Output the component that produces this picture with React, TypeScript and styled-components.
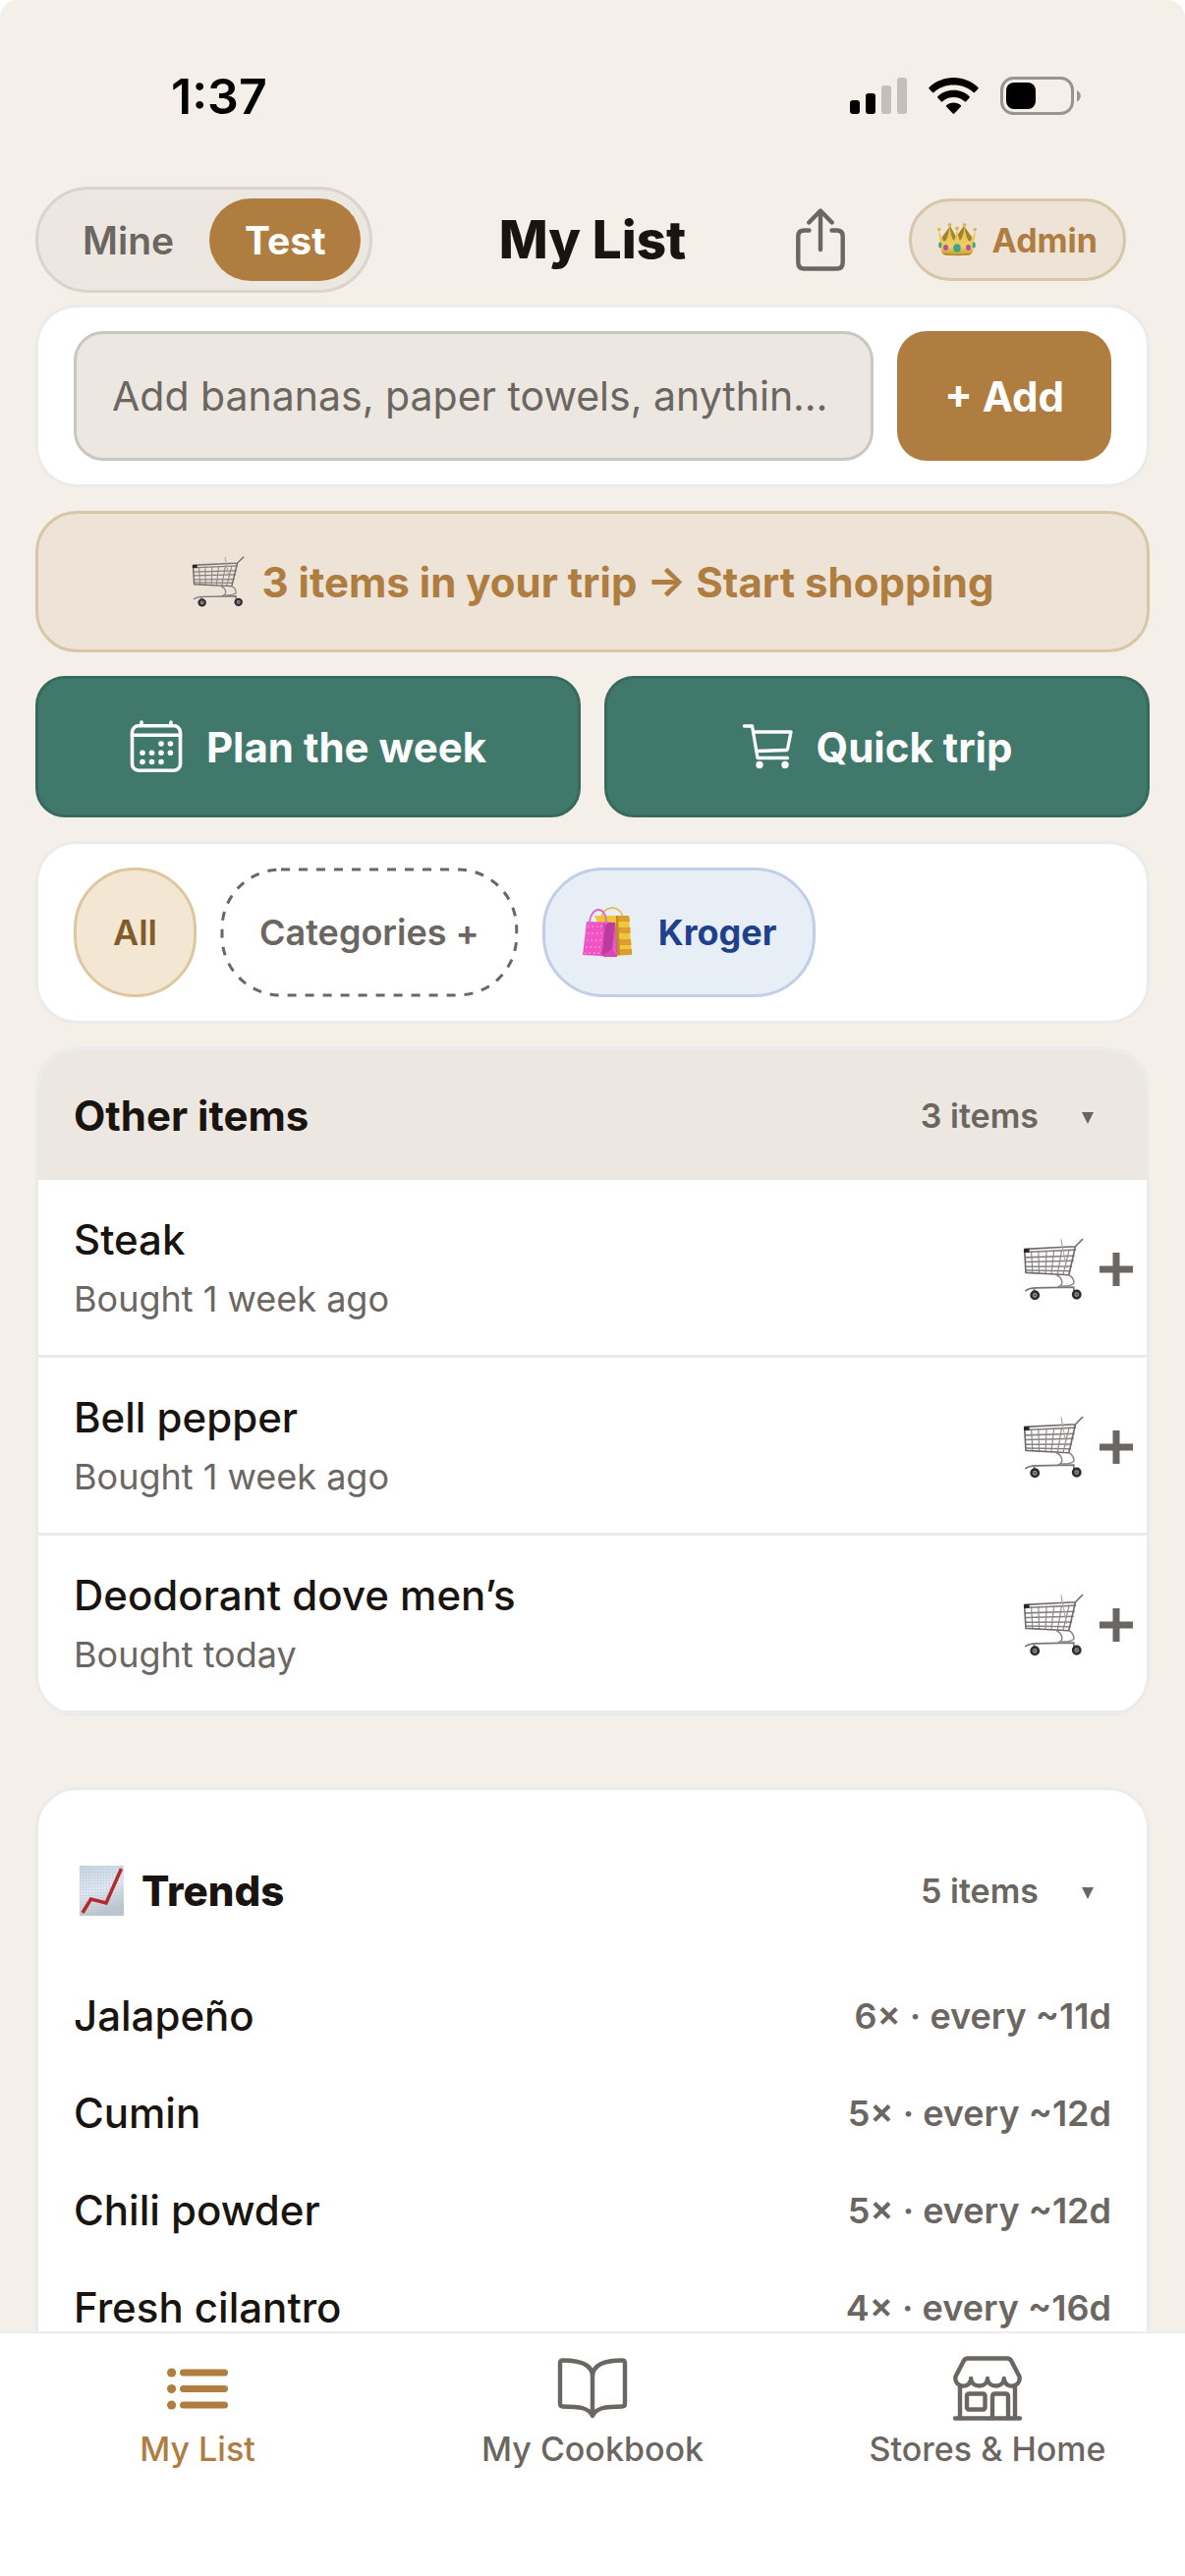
import React, { useState } from "react";
import styled, { createGlobalStyle } from "styled-components";

const color = {
  page: "#f4efe9",
  ink: "#1a1410",
  muted: "#6b6661",
  brand: "#af7d40",
  brandSoft: "#eee3d7",
  brandLine: "#d8c6a8",
  sunken: "#ece7e0",
  line: "#ebebeb",
  green: "#40796b",
  greenLine: "#376a5d",
  white: "#ffffff",
};

const GlobalStyle = createGlobalStyle`
  * { box-sizing: border-box; }
  html { background: ${color.white}; }
  body { margin: 0; font-family: Inter, "Liberation Sans", sans-serif; color: ${color.ink}; }
  button, input { font: inherit; color: inherit; margin: 0; }
  button { border: 0; padding: 0; background: none; cursor: pointer; }
  h1, h2, p, ul { margin: 0; padding: 0; }
  ul { list-style: none; }
  svg { display: block; flex: none; }
`;

const Screen = styled.div`
  display: flex;
  flex-direction: column;
  height: 100vh;
  background: ${color.page};
  border-radius: 18px 18px 0 0;
  overflow: hidden;
`;

const StatusBar = styled.div`
  display: flex;
  flex: none;
  justify-content: space-between;
  align-items: center;
  padding: 66px 106px 60px 174px;
`;

const Clock = styled.time`
  font-size: 50px;
  line-height: 64px;
  font-weight: 600;
  color: #000000;
`;

const StatusIcons = styled.div`
  display: flex;
  align-items: center;
  gap: 22px;
`;

const Header = styled.header`
  display: grid;
  flex: none;
  grid-template-columns: 1fr auto 1fr;
  align-items: center;
  padding: 0 36px 12px;
`;

const Segmented = styled.div`
  display: flex;
  justify-self: start;
  padding: 9px;
  border: 3px solid #d9d4cd;
  border-radius: 54px;
  background: ${color.sunken};
`;

const Segment = styled.button<{ $active: boolean }>`
  height: 84px;
  padding: 0 36px;
  border-radius: 42px;
  font-size: 39px;
  font-weight: ${(p) => (p.$active ? 700 : 600)};
  color: ${(p) => (p.$active ? color.white : color.muted)};
  background: ${(p) => (p.$active ? color.brand : "transparent")};
`;

const Title = styled.h1`
  font-size: 53px;
  line-height: 64px;
  font-weight: 800;
`;

const HeaderActions = styled.div`
  display: flex;
  justify-self: end;
  align-items: center;
  gap: 48px;
  padding-right: 24px;
`;

const IconButton = styled.button`
  display: grid;
  place-items: center;
  width: 84px;
  height: 84px;
  color: ${color.muted};
`;

const AdminBadge = styled.button`
  display: flex;
  align-items: center;
  gap: 16px;
  height: 84px;
  padding: 0 26px;
  border: 3px solid ${color.brandLine};
  border-radius: 42px;
  background: ${color.brandSoft};
  color: ${color.brand};
  font-size: 34px;
  font-weight: 700;
`;

const Content = styled.main`
  display: flex;
  flex: 1;
  flex-direction: column;
  gap: 24px;
  min-height: 0;
  padding: 0 36px;
  overflow: hidden;
`;

const Card = styled.section`
  flex: none;
  border: 3px solid ${color.line};
  border-radius: 42px;
  background: ${color.white};
  overflow: hidden;
`;

const Bar = styled(Card)`
  display: flex;
  gap: 24px;
  padding: 24px 36px;
`;

const AddForm = styled.form`
  display: flex;
  flex: 1;
  gap: 24px;
`;

const AddInput = styled.input`
  flex: 1;
  min-width: 0;
  height: 132px;
  padding: 0 36px;
  border: 3px solid #cac7c1;
  border-radius: 30px;
  background: ${color.sunken};
  font-size: 41px;
  outline: none;

  &::placeholder {
    color: ${color.muted};
    opacity: 1;
  }
`;

const AddButton = styled.button`
  flex: none;
  height: 132px;
  padding: 0 48px;
  border-radius: 30px;
  background: ${color.brand};
  color: ${color.white};
  font-size: 42px;
  font-weight: 700;
`;

const TripBanner = styled.button`
  display: flex;
  flex: none;
  justify-content: center;
  align-items: center;
  gap: 18px;
  height: 144px;
  border: 3px solid ${color.brandLine};
  border-radius: 42px;
  background: ${color.brandSoft};
  color: ${color.brand};
  font-size: 42px;
  font-weight: 700;
`;

const ActionRow = styled.div`
  display: grid;
  flex: none;
  grid-template-columns: 1fr 1fr;
  gap: 24px;
`;

const ActionButton = styled.button`
  display: flex;
  justify-content: center;
  align-items: center;
  gap: 24px;
  height: 144px;
  border: 3px solid ${color.greenLine};
  border-radius: 30px;
  background: ${color.green};
  color: ${color.white};
  font-size: 42px;
  font-weight: 700;
`;

const chipTones = {
  all: "border-color: #dec7a0; background: #f3e7d3; color: #835b2a; font-weight: 600;",
  add: "border-color: transparent; background: transparent; color: #6b6661; font-weight: 600;",
  store: "border-color: #c1cfe6; background: #e8eef6; color: #1f418c; font-weight: 700;",
};

const Chip = styled.button<{ $tone: keyof typeof chipTones }>`
  position: relative;
  display: flex;
  align-items: center;
  gap: 26px;
  height: 132px;
  padding: 0 37px;
  border: 3px solid;
  border-radius: 62px;
  font-size: 36px;
  ${(p) => chipTones[p.$tone]}
`;

const DashedRing = styled.svg`
  position: absolute;
  inset: -3px;
  width: calc(100% + 6px);
  height: calc(100% + 6px);
  padding: 2px;
  overflow: visible;
  fill: none;
  stroke: ${color.muted};
  stroke-width: 3px;
  stroke-dasharray: 9 9;
`;

const GroupHeader = styled.button<{ $filled?: boolean }>`
  display: flex;
  align-items: center;
  width: 100%;
  height: 132px;
  padding: 0 36px;
  background: ${(p) => (p.$filled ? color.sunken : "transparent")};
  text-align: left;
`;

const GroupTitle = styled.span<{ $strong?: boolean }>`
  display: flex;
  flex: 1;
  align-items: center;
  gap: 18px;
  padding-left: ${(p) => (p.$strong ? 6 : 0)}px;
  font-size: 42px;
  font-weight: ${(p) => (p.$strong ? 800 : 700)};
`;

const GroupCount = styled.span`
  font-size: 34px;
  font-weight: 600;
  color: ${color.muted};
`;

const Caret = styled.span`
  display: grid;
  place-items: center;
  width: 48px;
  margin-left: 26px;
  padding-top: 5px;
  color: ${color.muted};
`;

const ItemRow = styled.li`
  display: flex;
  align-items: center;
  gap: 16px;
  min-height: 181px;
  padding: 0 14px 0 36px;
  border-bottom: 3px solid ${color.line};
`;

const ItemText = styled.div`
  display: flex;
  flex: 1;
  flex-direction: column;
  gap: 9px;
`;

const ItemName = styled.p`
  font-size: 42px;
  line-height: 54px;
  font-weight: 500;
`;

const ItemNote = styled.p`
  font-size: 36px;
  line-height: 48px;
  color: ${color.muted};
`;

const RowButton = styled.button`
  display: grid;
  place-items: center;
  height: 72px;
  padding-top: 4px;
  color: ${color.muted};
`;

const TrendsCard = styled(Card)`
  margin-top: 48px;
  padding: 36px 0;
`;

const TrendList = styled.ul`
  padding: 12px 36px 0;
`;

const TrendRow = styled.li`
  display: flex;
  justify-content: space-between;
  align-items: center;
  height: 99px;
`;

const TrendRate = styled.span`
  font-size: 36px;
  font-weight: 600;
  color: ${color.muted};
`;

const TabBar = styled.nav`
  display: grid;
  flex: none;
  grid-template-columns: repeat(3, 1fr);
  padding: 20px 0 108px;
  border-top: 2px solid ${color.line};
  background: ${color.white};
`;

const Tab = styled.a<{ $active?: boolean }>`
  display: grid;
  justify-items: center;
  gap: 5px;
  color: ${(p) => (p.$active ? color.brand : color.muted)};
  font-size: 34px;
  line-height: 42px;
  font-weight: 500;
  text-decoration: none;
`;

const TabIcon = styled.span`
  display: grid;
  place-items: center;
  height: 72px;
`;

const SignalIcon = () => (
  <svg width="58" height="38" viewBox="0 0 58 38" aria-hidden="true">
    <rect x="0" y="23" width="10" height="14" rx="3" />
    <rect x="16" y="16" width="10" height="21" rx="3" />
    <rect x="32" y="8" width="10" height="29" rx="3" fill="#c5bfb9" />
    <rect x="48" y="0" width="10" height="37" rx="3" fill="#c5bfb9" />
  </svg>
);

const WifiIcon = () => (
  <svg width="51" height="38" viewBox="0 0 51 38" aria-hidden="true">
    <path d="M25.500 0C35.200 0 44 3.700 50.500 10Q51 10.700 50.400 11.400L47 15Q46.300 15.600 45.600 15C40.300 10 33.300 7.400 25.500 7.400S10.700 10 5.400 15Q4.700 15.600 4 15L.6 11.400Q0 10.700.5 10C7 3.700 15.800 0 25.500 0Z" />
    <path d="M25.500 12.800C31.800 12.800 37.500 15.200 41.700 19.200Q42.300 19.900 41.700 20.500L38.200 24.200Q37.500 24.800 36.800 24.200C33.800 21.500 29.800 20 25.500 20S17.200 21.500 14.200 24.200Q13.500 24.800 12.800 24.200L9.300 20.500Q8.700 19.900 9.300 19.200C13.500 15.200 19.200 12.800 25.500 12.800Z" />
    <path d="M25.500 25.500C28.300 25.500 30.900 26.500 32.900 28.200Q33.500 28.900 32.900 29.600L26.300 36.600Q25.500 37.300 24.700 36.600L18.100 29.600Q17.500 28.900 18.100 28.200C20.100 26.500 22.700 25.500 25.500 25.500Z" />
  </svg>
);

const BatteryIcon = () => (
  <svg width="82" height="40" viewBox="0 0 82 40" aria-hidden="true">
    <rect x="1.500" y="1.500" width="72" height="36" rx="12" fill="none" stroke="#98948f" strokeWidth="3" />
    <path d="M78 14c5 2.500 5 9 0 11.500z" fill="#98948f" />
    <rect x="6" y="6" width="30" height="27" rx="8" />
  </svg>
);

const ShareIcon = () => (
  <svg width="50" height="65" viewBox="0 0 50 65" fill="none" stroke="currentColor" strokeWidth="4.400" strokeLinecap="round" strokeLinejoin="round" aria-hidden="true">
    <path d="M13.500 22.500H8.500Q2.300 22.500 2.300 28.500V55Q2.300 61.500 8.500 61.500H41.500Q47.700 61.500 47.700 55V28.500Q47.700 22.500 41.500 22.500H36.500" />
    <path d="M25 42V3M13.300 14.500L25 2.500L36.700 14.500" />
  </svg>
);

const CrownIcon = () => (
  <svg width="40" height="34" viewBox="0 0 40 34" aria-hidden="true">
    <defs>
      <linearGradient id="crownGold" x1="0" y1="0" x2="0" y2="1">
        <stop offset="0" stopColor="#e0bd45" />
        <stop offset="0.700" stopColor="#ecd067" />
        <stop offset="1" stopColor="#c39a2d" />
      </linearGradient>
    </defs>
    <path d="M5 14L13 3L19 14L27 3L35 14V24H5Z" fill="#a5812f" />
    <path d="M1 7L6 18Q10 21 12.500 3Q14 16 17 18Q19 14 20 5Q21 14 23 18Q26 16 27.500 3Q30 21 34 18L39 7L36 29Q35 33 30 33H10Q5 33 4 29Z" fill="url(#crownGold)" />
    <g fill="#d9bb4c">
      <circle cx="1.800" cy="6.500" r="1.800" />
      <circle cx="12.500" cy="2" r="2" />
      <circle cx="20" cy="5.500" r="2" />
      <circle cx="27.500" cy="2" r="2" />
      <circle cx="38.200" cy="6.500" r="1.800" />
    </g>
    <ellipse cx="20" cy="25.500" rx="3.700" ry="4.200" fill="#3fa483" />
    <ellipse cx="8.500" cy="25" rx="2.500" ry="3" fill="#c348a4" />
    <ellipse cx="31.500" cy="25" rx="2.500" ry="3" fill="#c348a4" />
    <ellipse cx="2.800" cy="22.500" rx="1.600" ry="3" fill="#3fa483" />
    <ellipse cx="37.200" cy="22.500" rx="1.600" ry="3" fill="#3fa483" />
    <path d="M7 31.500Q20 34 33 31.500" stroke="#a9832a" fill="none" />
  </svg>
);

const TrolleyIcon = ({ width, height }: { width: number; height: number }) => (
  <svg width={width} height={height} viewBox="0 0 188 190" preserveAspectRatio="none" fill="none" aria-hidden="true">
    <path d="M5 43L164 36M6 59L160 54M7 73L157 69M8 87L152 86M9 98L147 100" stroke="#85807f" strokeWidth="4.500" />
    <path d="M26 39L30 106M48 39L50 107M73 38L70 108M96 37L88 109M120 36L107 110M143 35L124 111" stroke="#8b8787" strokeWidth="3.500" />
    <path d="M5 34L162 26L185 3M162 26L142 112L9 105L5 34" stroke="#706c6d" strokeWidth="5" strokeLinejoin="round" />
    <path d="M118 4L135 92" stroke="#aaa6a5" strokeWidth="3.500" />
    <path d="M103 112Q120 118 121 136Q119 145 108 149M142 112Q159 121 157 138Q145 147 117 145" stroke="#8e8989" strokeWidth="4.500" />
    <path d="M7 161Q17 151 42 151L157 149V160M35 151V164" stroke="#77777a" strokeWidth="5" />
    <rect x="3" y="33" width="17" height="11" fill="#262429" />
    <g fill="#aaa1a1" stroke="#302c2e" strokeWidth="8">
      <circle cx="37" cy="173" r="11" />
      <circle cx="166" cy="171" r="11" />
    </g>
    <circle cx="37" cy="173" r="4" fill="#5b5254" />
    <circle cx="166" cy="171" r="4" fill="#5b5254" />
  </svg>
);

const CalendarIcon = () => (
  <svg width="54" height="54" viewBox="0 0 54 54" fill="none" stroke="currentColor" strokeWidth="3.600" strokeLinecap="round" aria-hidden="true">
    <rect x="2.500" y="5.800" width="49" height="45.400" rx="6.500" />
    <path d="M2.500 15.300H51.500M12 2V5M42 2V5" />
    <g fill="currentColor" stroke="none">
      {[[32, 24], [41.400, 24], [13, 33.200], [22.500, 33.200], [32, 33.200], [41.400, 33.200], [13, 42.500], [22.500, 42.500], [32, 42.500]].map(
        ([x, y]) => <circle key={`${x}-${y}`} cx={x} cy={y} r="2.800" />
      )}
    </g>
  </svg>
);

const CartIcon = () => (
  <svg width="52" height="48" viewBox="0 0 52 48" fill="none" stroke="currentColor" strokeWidth="3.300" strokeLinecap="round" strokeLinejoin="round" aria-hidden="true">
    <path d="M2.500 3H10.500L16 35.500H46.500" />
    <path d="M12.500 9H50L46.500 26.500Q46.200 27.500 45 27.500L15 28.500" />
    <circle cx="18" cy="42.500" r="3.700" fill="currentColor" stroke="none" />
    <circle cx="44" cy="42.500" r="3.700" fill="currentColor" stroke="none" />
  </svg>
);

const BagsIcon = () => (
  <svg width="52" height="52" viewBox="0 0 52 52" aria-hidden="true">
    <path d="M20 11C22-1 38-3 42 10" fill="none" stroke="#e5b94a" strokeWidth="1.600" />
    <path d="M13 9H48L51 49L31 50Z" fill="#f0c63b" />
    <path d="M36 9H48L49 15H37ZM37 21H49.500V27H38ZM38 33H50L50.500 39H38ZM38 43H51V49H38Z" fill="#dd9e2d" />
    <path d="M37 9L39 49L35 50V9Z" fill="#c18b25" />
    <path d="M5 15L34 16L36 51L1 49Z" fill="#ef55c4" />
    <path d="M22 16L34 16L36 51H22Z" fill="#d947b3" />
    <path d="M25 16L20 50L31 43L36 51L34 16Z" fill="#bd3aa1" />
    <path d="M34 16L31 43L36 51Z" fill="#e55bc5" />
    <path d="M8 18C8-1 26-3 25 18" fill="none" stroke="#d86ccd" strokeWidth="1.800" />
    <path d="M6 20H22M6 27H22M5 34H21M4 41H20M3 47H20" stroke="#ff9be2" strokeWidth="1.500" strokeDasharray="1.500 3" />
  </svg>
);

const ChartIcon = () => (
  <svg width="45" height="51" viewBox="0 0 45 51" aria-hidden="true">
    <defs>
      <linearGradient id="chartPaper" x1="0" y1="0" x2="0.300" y2="1">
        <stop offset="0" stopColor="#c3d3e2" />
        <stop offset="0.550" stopColor="#e2e9f2" />
        <stop offset="1" stopColor="#bcc4cd" />
      </linearGradient>
      <pattern id="chartGrid" width="3" height="3" patternUnits="userSpaceOnUse">
        <path d="M0 0H3M0 0V3" stroke="#b4c4d4" strokeWidth="0.600" />
      </pattern>
    </defs>
    <rect width="45" height="51" fill="url(#chartPaper)" />
    <rect width="45" height="51" fill="url(#chartGrid)" />
    <path d="M3 48L11.500 34L27 38L42.500 3" fill="none" stroke="#b32a2d" strokeWidth="3.500" />
  </svg>
);

const CaretIcon = () => (
  <svg width="12" height="12" viewBox="0 0 12 12" fill="currentColor" aria-hidden="true">
    <path d="M0 0H12L6 12Z" />
  </svg>
);

const PlusIcon = () => (
  <svg width="34" height="34" viewBox="0 0 34 34" fill="currentColor" aria-hidden="true">
    <path d="M13.500 0H20.500V13.500H34V20.500H20.500V34H13.500V20.500H0V13.500H13.500Z" />
  </svg>
);

const ListIcon = () => (
  <svg width="62" height="43" viewBox="0 0 62 43" fill="currentColor" aria-hidden="true">
    {[5, 21.500, 38].map((y) => (
      <g key={y}>
        <circle cx="4.600" cy={y} r="4.600" />
        <rect x="13" y={y - 3.600} width="49" height="7.200" rx="3.600" />
      </g>
    ))}
  </svg>
);

const BookIcon = () => (
  <svg width="72" height="62" viewBox="0 0 72 62" fill="none" stroke="currentColor" strokeWidth="4.400" strokeLinejoin="round" aria-hidden="true">
    <path d="M36 59C32 51 24 49.500 6 49.500Q3 49.500 3 46.500V5.500Q3 2.500 6 2.500C24 2.500 36 7 36 19C36 7 48 2.500 66 2.500Q69 2.500 69 5.500V46.500Q69 49.500 66 49.500C48 49.500 40 51 36 59V19" />
  </svg>
);

const StoreIcon = () => (
  <svg width="72" height="68" viewBox="0 0 72 68" fill="none" stroke="currentColor" strokeWidth="4.400" strokeLinecap="round" strokeLinejoin="round" aria-hidden="true">
    <path d="M16 3.500H56Q59 3.500 60.500 6.500L68.500 22C70.500 34 53 35 52.800 24C52.500 34 36.300 34 36 24C35.700 34 19.500 34 19.200 24C19 35 1.500 34 3.500 22L11.500 6.500Q13 3.500 16 3.500Z" />
    <path d="M8 32V64M64 32V64M3 64.500H69" />
    <rect x="15" y="39.500" width="18.500" height="16" rx="2" />
    <path d="M41 64V42.500Q41 39.500 44 39.500H54Q57 39.500 57 42.500V64" />
  </svg>
);

const items = [
  { name: "Steak", note: "Bought 1 week ago" },
  { name: "Bell pepper", note: "Bought 1 week ago" },
  { name: "Deodorant dove men’s", note: "Bought today" },
];

const trends = [
  { name: "Jalapeño", rate: "6× · every ~11d" },
  { name: "Cumin", rate: "5× · every ~12d" },
  { name: "Chili powder", rate: "5× · every ~12d" },
  { name: "Fresh cilantro", rate: "4× · every ~16d" },
];

const lists = ["Mine", "Test"];

export default function App() {
  const [list, setList] = useState("Test");

  return (
    <Screen>
      <GlobalStyle />
      <StatusBar>
        <Clock>1:37</Clock>
        <StatusIcons>
          <SignalIcon />
          <WifiIcon />
          <BatteryIcon />
        </StatusIcons>
      </StatusBar>

      <Header>
        <Segmented>
          {lists.map((name) => (
            <Segment key={name} type="button" $active={name === list} aria-pressed={name === list} onClick={() => setList(name)}>
              {name}
            </Segment>
          ))}
        </Segmented>
        <Title>My List</Title>
        <HeaderActions>
          <IconButton type="button" aria-label="Share">
            <ShareIcon />
          </IconButton>
          <AdminBadge type="button">
            <CrownIcon />
            Admin
          </AdminBadge>
        </HeaderActions>
      </Header>

      <Content>
        <Bar>
          <AddForm onSubmit={(e) => e.preventDefault()}>
            <AddInput type="text" aria-label="Add an item" placeholder="Add bananas, paper towels, anythin…" />
            <AddButton type="submit">+ Add</AddButton>
          </AddForm>
        </Bar>

        <TripBanner type="button">
          <TrolleyIcon width={54} height={52} />
          3 items in your trip → Start shopping
        </TripBanner>

        <ActionRow>
          <ActionButton type="button">
            <CalendarIcon />
            Plan the week
          </ActionButton>
          <ActionButton type="button">
            <CartIcon />
            Quick trip
          </ActionButton>
        </ActionRow>

        <Bar>
          <Chip type="button" $tone="all">All</Chip>
          <Chip type="button" $tone="add">
            <DashedRing aria-hidden="true">
              <rect width="100%" height="100%" rx="60" />
            </DashedRing>
            Categories +
          </Chip>
          <Chip type="button" $tone="store">
            <BagsIcon />
            Kroger
          </Chip>
        </Bar>

        <Card>
          <GroupHeader type="button" $filled aria-expanded="true">
            <GroupTitle>Other items</GroupTitle>
            <GroupCount>3 items</GroupCount>
            <Caret><CaretIcon /></Caret>
          </GroupHeader>
          <ul>
            {items.map((item) => (
              <ItemRow key={item.name}>
                <ItemText>
                  <ItemName>{item.name}</ItemName>
                  <ItemNote>{item.note}</ItemNote>
                </ItemText>
                <RowButton type="button" aria-label={`Add ${item.name} to trip`}>
                  <TrolleyIcon width={62} height={64} />
                </RowButton>
                <RowButton type="button" aria-label={`Add one ${item.name}`}>
                  <PlusIcon />
                </RowButton>
              </ItemRow>
            ))}
          </ul>
        </Card>

        <TrendsCard>
          <GroupHeader type="button" aria-expanded="true">
            <GroupTitle $strong>
              <ChartIcon />
              Trends
            </GroupTitle>
            <GroupCount>5 items</GroupCount>
            <Caret><CaretIcon /></Caret>
          </GroupHeader>
          <TrendList>
            {trends.map((trend) => (
              <TrendRow key={trend.name}>
                <ItemName>{trend.name}</ItemName>
                <TrendRate>{trend.rate}</TrendRate>
              </TrendRow>
            ))}
          </TrendList>
        </TrendsCard>
      </Content>

      <TabBar>
        <Tab href="#list" $active aria-current="page">
          <TabIcon><ListIcon /></TabIcon>
          My List
        </Tab>
        <Tab href="#cookbook">
          <TabIcon><BookIcon /></TabIcon>
          My Cookbook
        </Tab>
        <Tab href="#stores">
          <TabIcon><StoreIcon /></TabIcon>
          Stores &amp; Home
        </Tab>
      </TabBar>
    </Screen>
  );
}
